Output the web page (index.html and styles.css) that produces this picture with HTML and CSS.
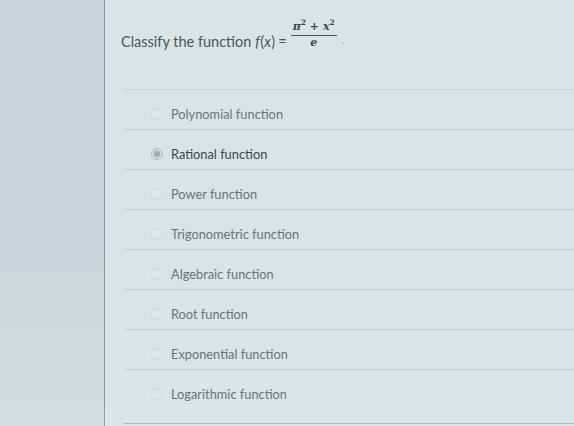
FILE: index.html
```html
<!DOCTYPE html>
<html>
<head>
<meta charset="utf-8">
<link rel="stylesheet" href="styles.css">
</head>
<body>
<div class="page">
  <aside class="side"></aside>
  <main class="panel">
    <div class="question">
      <span>Classify the function</span>
      <span class="fx"><i>f</i>(<i>x</i>)</span>
      <span class="eq">=</span>
      <span class="frac"><span class="num"><i>π</i><sup>2</sup> + <i>x</i><sup>2</sup></span><span class="den"><i>e</i></span></span>
      <span class="dot">.</span>
    </div>
    <ul class="options">
      <li class="opt"><span class="radio"></span><span class="label">Polynomial function</span></li>
      <li class="opt selected"><span class="radio"></span><span class="label">Rational function</span></li>
      <li class="opt"><span class="radio"></span><span class="label">Power function</span></li>
      <li class="opt"><span class="radio"></span><span class="label">Trigonometric function</span></li>
      <li class="opt"><span class="radio"></span><span class="label">Algebraic function</span></li>
      <li class="opt"><span class="radio"></span><span class="label">Root function</span></li>
      <li class="opt"><span class="radio"></span><span class="label">Exponential function</span></li>
      <li class="opt last"><span class="radio"></span><span class="label">Logarithmic function</span></li>
    </ul>
  </main>
</div>
</body>
</html>
```

FILE: styles.css
```css
html, body {
  margin: 0;
  padding: 0;
  height: 100%;
}
body {
  font-family: Lato, "Open Sans", "Liberation Sans", sans-serif;
  background: #cdd7db;
  overflow: hidden;
}
.page {
  display: flex;
  width: 574px;
  height: 426px;
}
.side {
  width: 104px;
  flex: none;
  background: linear-gradient(180deg, #cad5d9 0%, #cdd7db 60%, #d3dbde 100%);
  border-right: 1px solid #8f9a9f;
}
.panel {
  flex: 1;
  background: linear-gradient(180deg, #dae4e7 0%, #d9e3e6 50%, #dbe4e7 100%);
  padding-top: 19px;
}
.question {
  display: flex;
  align-items: center;
  gap: 3px;
  padding-left: 16px;
  height: 44px;
  font-size: 14.5px;
  color: #4c5458;
}
.fx {
  margin-left: 1px;
  letter-spacing: 0.2px;
}
.eq {
  margin: 0 1px 0 0;
}
.frac {
  display: inline-flex;
  flex-direction: column;
  align-items: center;
  font-size: 11px;
  font-family: "DejaVu Serif", "Liberation Serif", serif;
  font-weight: bold;
  color: #3f474b;
  margin-bottom: 12px;
}
.num {
  padding: 0 2px 2px;
  border-bottom: 1px solid #4a5256;
  line-height: 12px;
}
.num sup {
  font-size: 7.5px;
  vertical-align: 5px;
  line-height: 0;
}
.den {
  line-height: 14px;
}
.dot {
  font-size: 10px;
  margin-left: 2px;
  margin-bottom: 2px;
  color: #7a8488;
}
.options {
  list-style: none;
  margin: 26px 0 0 19px;
  padding: 0;
  border-top: 1px solid #c9d3d6;
}
.opt {
  display: flex;
  align-items: center;
  height: 40px;
  padding-left: 27px;
  border-bottom: 1px solid #c5cfd3;
  box-sizing: border-box;
  padding-top: 8px;
}
.opt.last {
  height: 54px;
  padding-top: 0;
  padding-bottom: 6px;
  border-bottom: 1px solid #aeb9bd;
}
.radio {
  width: 12px;
  height: 12px;
  border-radius: 50%;
  border: 1px solid #cdd6d9;
  background: #dde6e9;
  box-sizing: border-box;
  flex: none;
}
.selected .radio {
  border: 1px solid #b3bbbe;
  background: radial-gradient(circle, #a3abae 0 3px, #cfd7da 3.5px);
}
.label {
  margin-left: 8px;
  font-size: 12.8px;
  color: #6a7377;
}
.selected .label {
  color: #3d4549;
}
```
